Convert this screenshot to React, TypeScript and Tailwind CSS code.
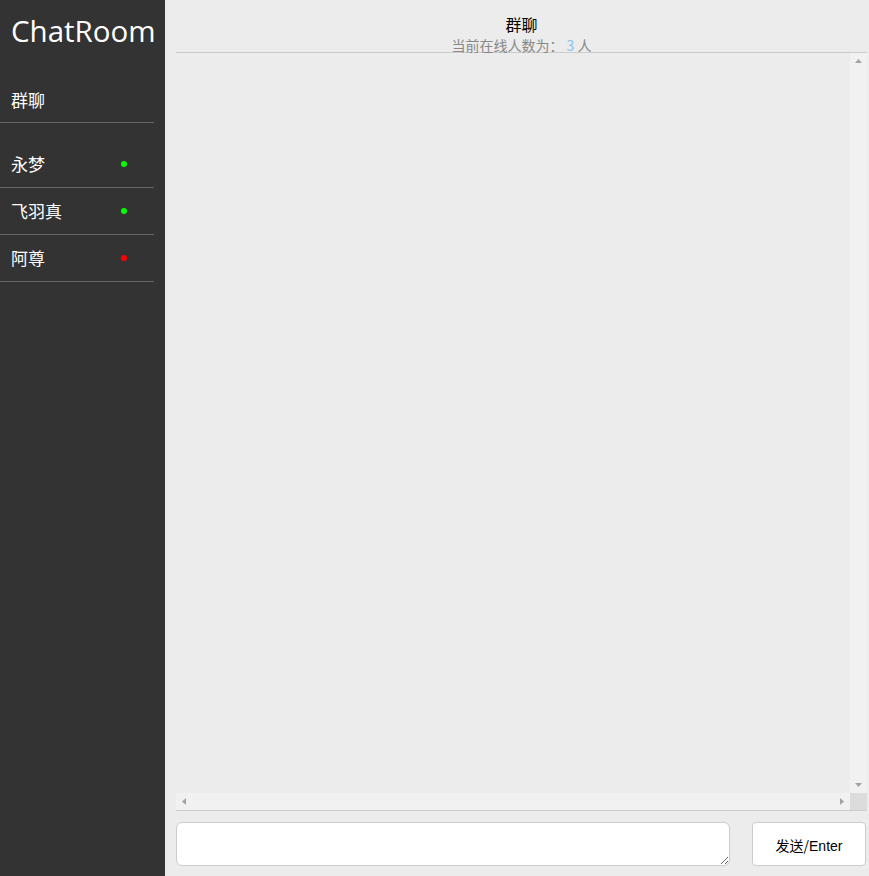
import React, { useState } from "react";

const users = [
  { name: "永梦", online: true },
  { name: "飞羽真", online: true },
  { name: "阿尊", online: false },
];

const cjk = "font-['Microsoft_YaHei','Noto_Sans_CJK_SC',sans-serif]";

const Arrow = ({ dir }: { dir: "up" | "down" | "left" | "right" }) => {
  const pts = {
    up: "0,4 7,4 3.5,0",
    down: "0,0 7,0 3.5,4",
    left: "4,0 4,7 0,3.5",
    right: "0,0 0,7 4,3.5",
  }[dir];
  const vertical = dir === "up" || dir === "down";
  return (
    <svg width={vertical ? 7 : 4} height={vertical ? 4 : 7} viewBox={vertical ? "0 0 7 4" : "0 0 4 7"}>
      <polygon points={pts} fill="#a3a3a3" />
    </svg>
  );
};

const App = () => {
  const [text, setText] = useState("");

  return (
    <div className={`flex w-full h-screen bg-[#ececec] ${cjk}`}>
      <aside className="w-[165px] shrink-0 bg-[#333333] text-white">
        <h1 className="pl-[11px] pt-[9px] h-[80px] text-[29.5px] leading-[44px] font-['Open_Sans',sans-serif] whitespace-nowrap">
          ChatRoom
        </h1>
        <div className="w-[154px] h-[43px] pl-[11px] text-[17px] leading-[40px] border-b border-[#666]">
          群聊
        </div>
        <ul className="mt-[18px] w-[154px]">
          {users.map(u => (
            <li
              key={u.name}
              className="flex items-center justify-between h-[47px] pl-[11px] pr-[27px] text-[17px] border-b border-[#666]"
            >
              <span className="-mt-[1px]">{u.name}</span>
              <span
                className={`w-[6px] h-[6px] rounded-full ${u.online ? "bg-[#00ff00]" : "bg-[#ff0000]"}`}
              />
            </li>
          ))}
        </ul>
      </aside>

      <main className="flex-1 flex flex-col pl-[11px] pr-[2px] min-w-0">
        <header className="h-[53px] shrink-0 border-b border-[#cccccc] text-center pt-[13px]">
          <div className="text-[16px] leading-[22px] text-black">群聊</div>
          <div className="text-[14px] leading-[20px] text-[#888]">
            当前在线人数为：<span className="text-[#87c5f5]"> 3 </span>人
          </div>
        </header>

        <section className="flex-1 min-h-0 grid grid-cols-[1fr_17px] grid-rows-[1fr_17px] border-b border-[#cccccc]">
          <div className="overflow-hidden"></div>
          <div className="bg-[#f1f1f1] flex flex-col items-center justify-between pt-[6px] pb-[6px]">
            <Arrow dir="up" />
            <Arrow dir="down" />
          </div>
          <div className="bg-[#f1f1f1] flex items-center justify-between pl-[6px] pr-[6px]">
            <Arrow dir="left" />
            <Arrow dir="right" />
          </div>
          <div className="bg-[#dcdcdc]"></div>
        </section>

        <footer className="h-[65px] shrink-0 flex items-start pt-[11px] gap-[22px]">
          <textarea
            value={text}
            onChange={e => setText(e.target.value)}
            className="w-[554px] h-[44px] bg-white border border-[#cccccc] rounded-[6px] outline-none p-1 text-sm"
          />
          <button className="w-[114px] h-[44px] pt-[3px] bg-white border border-[#cccccc] rounded-[4px] text-[14px] text-black">
            发送/<span className="font-['Liberation_Sans',sans-serif]">Enter</span>
          </button>
        </footer>
      </main>
    </div>
  );
};

export default App;
